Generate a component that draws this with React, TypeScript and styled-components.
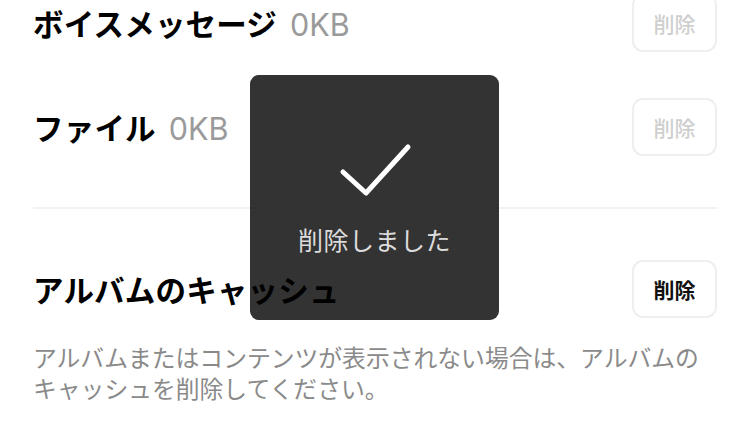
import React from "react";
import styled, { createGlobalStyle } from "styled-components";

const GlobalStyle = createGlobalStyle`
  html, body {
    margin: 0;
    padding: 0;
    background: #ffffff;
    overflow: hidden;
  }
  body {
    font-family: "Inter", "Noto Sans CJK JP", sans-serif;
    -webkit-font-smoothing: antialiased;
  }
`;

const Screen = styled.div`
  position: relative;
  width: 750px;
  height: 429px;
  overflow: hidden;
  background: #fff;
`;

const Page = styled.div`
  margin-top: -29px;
  padding: 0 33px;
  display: flex;
  flex-direction: column;
`;

const Row = styled.div`
  display: flex;
  align-items: center;
  justify-content: space-between;
  height: 104px;
`;

const Title = styled.div`
  display: flex;
  align-items: baseline;
  gap: 13px;
  font-size: 30.5px;
  font-weight: 700;
  color: #000;
  letter-spacing: 0.2px;
`;

const Size = styled.span`
  font-family: "Inter", sans-serif;
  font-weight: 400;
  font-size: 30.5px;
  color: #9a9a9a;
  letter-spacing: 0;
`;

const DeleteButton = styled.button<{ $disabled?: boolean }>`
  width: 85px;
  height: 58px;
  box-sizing: border-box;
  border: 2px solid #efefef;
  border-radius: 11px;
  background: #fff;
  font-family: "Noto Sans CJK JP", sans-serif;
  font-size: 21px;
  font-weight: ${(p) => (p.$disabled ? 500 : 700)};
  color: ${(p) => (p.$disabled ? "#cfcfcf" : "#111")};
  padding: 0;
  display: flex;
  align-items: center;
  justify-content: center;
`;

const Divider = styled.div`
  height: 2px;
  background: #f2f2f2;
  margin: 28px 0 28px;
`;

const Description = styled.p`
  margin: 0;
  font-family: "Noto Sans CJK JP", sans-serif;
  font-size: 23.8px;
  line-height: 31px;
  color: #8a8a8a;
  letter-spacing: 0;
`;

const Toast = styled.div`
  position: absolute;
  left: 250px;
  top: 75px;
  width: 249px;
  height: 245px;
  border-radius: 9px;
  background: rgba(0, 0, 0, 0.8);
  display: flex;
  flex-direction: column;
  align-items: center;
  box-sizing: border-box;
  padding-top: 66px;
`;

const ToastText = styled.div`
  margin-top: 24px;
  font-family: "Noto Sans CJK JP", sans-serif;
  font-size: 25px;
  line-height: 32px;
  color: #dcdcdc;
  letter-spacing: 0.5px;
`;

const Check = () => (
  <svg width="76" height="58" viewBox="0 0 76 58" fill="none">
    <path
      d="M6 31 L29 52 L71 6"
      stroke="#ffffff"
      strokeWidth="5"
      strokeLinecap="round"
      strokeLinejoin="round"
    />
  </svg>
);

export default function App() {
  return (
    <Screen>
      <GlobalStyle />
      <Page>
        <Row>
          <Title>
            ボイスメッセージ<Size>0KB</Size>
          </Title>
          <DeleteButton $disabled>削除</DeleteButton>
        </Row>
        <Row>
          <Title>
            ファイル<Size>0KB</Size>
          </Title>
          <DeleteButton $disabled>削除</DeleteButton>
        </Row>
        <Divider />
        <Row>
          <Title>アルバムのキャッシュ</Title>
          <DeleteButton>削除</DeleteButton>
        </Row>
        <Description>
          アルバムまたはコンテンツが表示されない場合は、アルバムの
          <br />
          キャッシュを削除してください。
        </Description>
      </Page>
      <Toast>
        <Check />
        <ToastText>削除しました</ToastText>
      </Toast>
    </Screen>
  );
}
